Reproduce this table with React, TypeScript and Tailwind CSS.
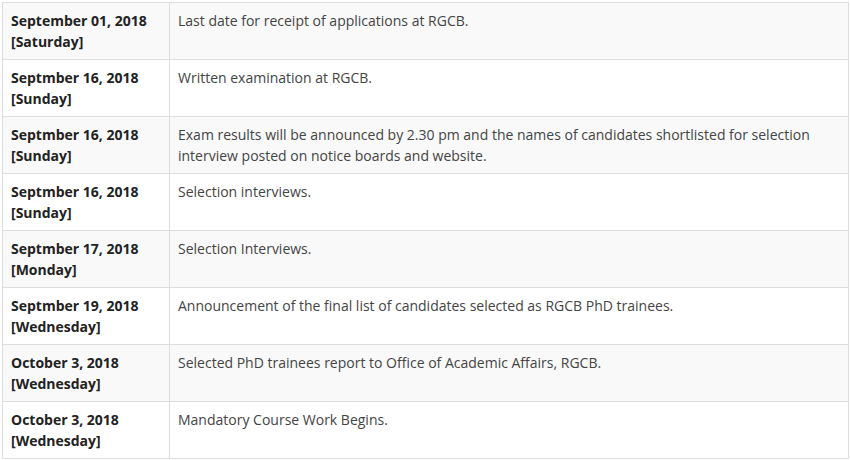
import React from "react";

const rows: [string, string, string][] = [
  ["September 01, 2018", "[Saturday]", "Last date for receipt of applications at RGCB."],
  ["Septmber 16, 2018", "[Sunday]", "Written examination at RGCB."],
  ["Septmber 16, 2018", "[Sunday]", "Exam results will be announced by 2.30 pm and the names of candidates shortlisted for selection interview posted on notice boards and website."],
  ["Septmber 16, 2018", "[Sunday]", "Selection interviews."],
  ["Septmber 17, 2018", "[Monday]", "Selection Interviews."],
  ["Septmber 19, 2018", "[Wednesday]", "Announcement of the final list of candidates selected as RGCB PhD trainees."],
  ["October 3, 2018", "[Wednesday]", "Selected PhD trainees report to Office of Academic Affairs, RGCB."],
  ["October 3, 2018", "[Wednesday]", "Mandatory Course Work Begins."],
];

export default function App() {
  return (
    <div className="w-[850px] h-[460px] bg-white pt-[2px] pl-[2px]" style={{ fontFamily: '"Open Sans", sans-serif' }}>
      <table className="w-[847px] border-collapse border border-[#dddddd] text-[14px] leading-[21px] text-[#333333]">
        <tbody>
          {rows.map((r, i) => (
            <tr key={i} className={i % 2 === 0 ? "bg-[#f9f9f9] h-[57px]" : "bg-white h-[57px]"}>
              <td className="w-[167px] border border-[#dddddd] px-[8px] py-[7px] align-top font-bold text-[#222222]">
                {r[0]}
                <br />
                {r[1]}
              </td>
              <td className="border border-[#dddddd] px-[8px] py-[7px] align-top text-[#444444]">{r[2]}</td>
            </tr>
          ))}
        </tbody>
      </table>
    </div>
  );
}
